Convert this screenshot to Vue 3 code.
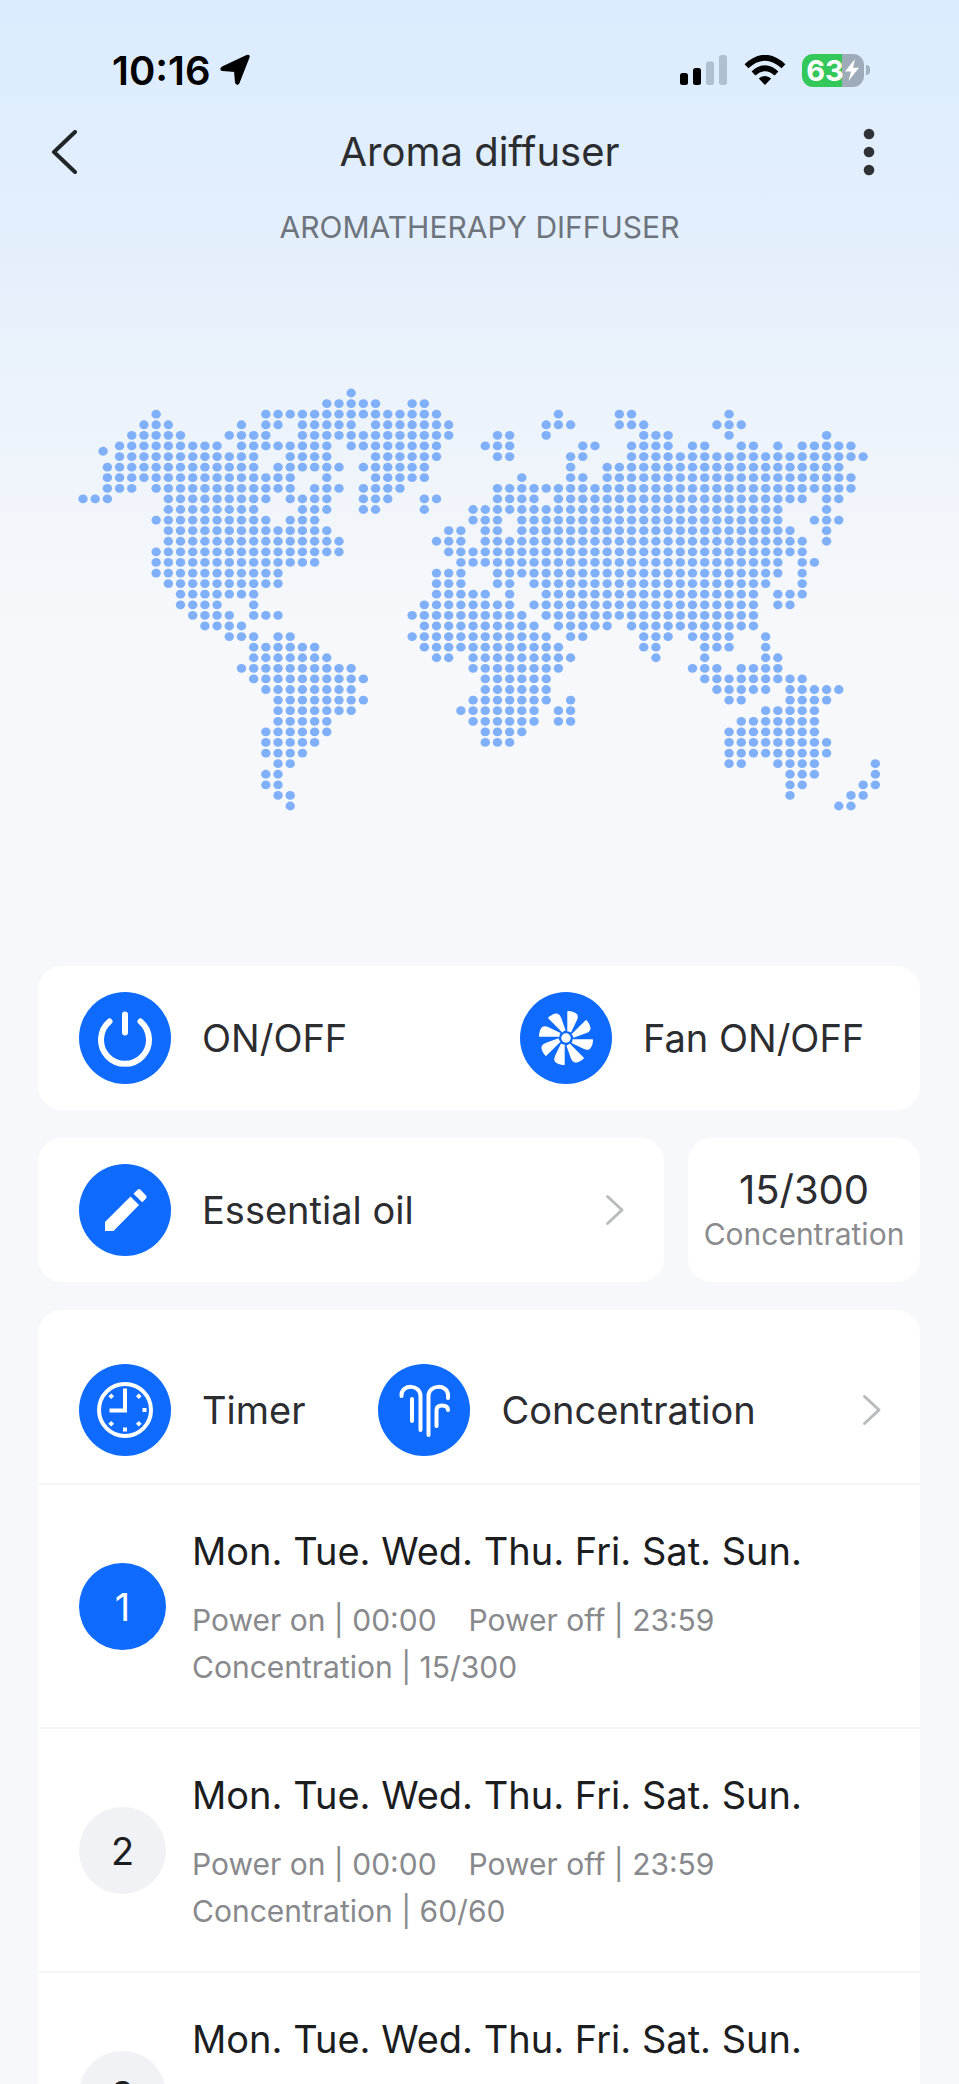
<script setup>
const land = [
  '22', '20-24 27-28', '6 15-29 39 44-45 53', '5-7 13 15-16 18-22 24-30 38-40 44-46 52-54',
  '4-8 12-15 18-30 34-35 38 46-48 53 61', '3-11 13-20 22-29 33-35 41-42 45-48 50-51 54-55 57 59-63',
  '3-14 17-20 24-29 34-35 40-41 45-64', '2-14 16-21 23-28 40 43-62',
  '2-17 20 24-28 36 40-41 43-63', '2-4 6-17 19-21 23-26 34-63',
  '0-2 7-15 17-20 23-25 28-29 34-37 39-59 61-62', '7-14 18-20 23-24 28 32-57 61',
  '6-15 17-19 32-34 36-57 60-62', '7-20 30-31 33-34 36-58 61', '7-21 29-31 33-59 61',
  '6-21 30-59', '6-19 31-57 59-60', '6-16 29-31 34-57 59', '7-16 29-31 34-35 37-56 59',
  '8-14 29-33 35 38-55 57-59', '8-11 14 28-35 37-55 57-58', '9-12 14-16 27-36 38-55',
  '10-13 28-37 39-43 45-55', '12-14 16-17 27-38 40-41 46-48 50-53 56',
  '14-19 28-39 46-47 51-53 56', '14-20 29-30 32-40 47 51 56-57', '13-22 32-39 50-52 54-57',
  '14-23 33-38 51-59', '15-22 33-38 52-56 58-62', '16-23 32-38 40 53-54 58-61',
  '16-22 31-37 39-40 56-60', '16-20 32-37 39-40 54-60', '15-20 33-36 53-60',
  '15-19 33-35 53-61', '15-18 53-61', '16-17 53-54 57-60 65', '15-16 58-60 65',
  '15-16 58-59 64-65', '16-17 58 63-64', '17 62-63'
]

const dots = land.flatMap((row, r) =>
  row.split(' ').flatMap((span) => {
    const [from, to = from] = span.split('-').map(Number)
    return Array.from({ length: to - from + 1 }, (_, i) => ({ c: from + i, r }))
  })
)
dots.push({ c: 1.65, r: 5.5 })

const schedules = [
  { id: 1, on: '00:00', off: '23:59', level: '15/300', active: true },
  { id: 2, on: '00:00', off: '23:59', level: '60/60', active: false },
  { id: 3, active: false }
]
const blades = [0, 45, 90, 135, 180, 225, 270, 315]
const ticks = [45, 90, 135, 180, 225, 315]
</script>

<template>
  <div class="screen">
    <div class="status">
      <div class="clock">
        <span>10:16</span>
        <svg class="arrow" viewBox="0 0 32 32" aria-hidden="true"><path d="M28 2Q30.500 1 29.500 3.500L19.500 29Q18 31 17 28.500L16 17L3.500 16Q1 15 3.500 13.500Z" /></svg>
      </div>
      <div class="signals">
        <svg class="bars" viewBox="0 0 48 30" aria-hidden="true">
          <rect x="0" y="18" width="8" height="12" rx="2.500" /><rect x="13" y="13" width="8" height="17" rx="2.500" />
          <g fill="#b1c0d0"><rect x="26" y="6.500" width="8" height="23.500" rx="2.500" /><rect x="39" y="0" width="8" height="30" rx="2.500" /></g>
        </svg>
        <svg class="wifi" viewBox="0 0 42 30" aria-hidden="true">
          <g fill="none" stroke="#000" stroke-width="5.600"><path d="M2.500 11.200Q21-5.800 39.500 11.200" /><path d="M9.500 18.500Q21 8 32.500 18.500" /></g>
          <path d="M14.800 23.600Q21 18.200 27.200 23.600L21 30Z" />
        </svg>
        <div class="battery"><span>63</span><svg viewBox="0 0 16 22" aria-hidden="true"><path d="M11 0L1 12.500H7L4.500 22L15 8.800H9Z" /></svg></div>
      </div>
    </div>

    <header class="bar">
      <button class="plain" aria-label="Back"><svg class="back" viewBox="0 0 28 44" aria-hidden="true"><path d="M25 2L4 22L25 42" /></svg></button>
      <h1>Aroma diffuser</h1>
      <button class="plain more" aria-label="More"><svg class="kebab" viewBox="0 0 12 48" aria-hidden="true"><circle cx="6" cy="6" r="5.300" /><circle cx="6" cy="24" r="5.300" /><circle cx="6" cy="42" r="5.300" /></svg></button>
    </header>
    <p class="model">AROMATHERAPY DIFFUSER</p>

    <svg class="map" viewBox="0 0 802 423" role="img" aria-label="World map">
      <ellipse v-for="(d, i) in dots" :key="i" :cx="5 + d.c * 12.19" :cy="5 + d.r * 10.59" rx="4.700" ry="4.400" />
    </svg>

    <main class="panels">
      <section class="card pair">
        <button class="action">
          <svg class="disc" viewBox="0 0 92 92" aria-hidden="true"><circle cx="46" cy="46" r="46" /><path class="line thick" d="M46 22.500V40.500M30.500 29.500A24 24 0 1 0 61.500 29.500" /></svg>
          <span>ON/OFF</span>
        </button>
        <button class="action">
          <svg class="disc" viewBox="0 0 92 92" aria-hidden="true">
            <circle cx="46" cy="46" r="46" />
            <g class="solid"><circle cx="46" cy="46" r="4.700" /><path v-for="a in blades" :key="a" :transform="`rotate(${a} 46 46)`" d="M47.300 39.500V19.500Q47.300 18.800 49 19Q55 19.700 57.200 22.500Q58.500 25 57 28L51 40.500Q49.500 39.300 47.300 39.500Z" /></g>
          </svg>
          <span>Fan ON/OFF</span>
        </button>
      </section>

      <div class="split">
        <button class="card action oil">
          <svg class="disc" viewBox="0 0 92 92" aria-hidden="true"><circle cx="46" cy="46" r="46" /><path class="solid" d="M26 58L51.500 32.500L60 41L34.500 67H26ZM54.500 29.700L58.500 25.700Q60 24.500 61.500 25.700L67 31.500Q68.200 33 67 34.500L63.200 38.300Z" /></svg>
          <span class="grow">Essential oil</span>
          <svg class="chevron" viewBox="0 0 20 32" aria-hidden="true"><path d="M2.500 2.500L17 16L2.500 29.500" /></svg>
        </button>
        <div class="card level"><strong>15/300</strong><span>Concentration</span></div>
      </div>

      <section class="card plan">
        <button class="action head">
          <svg class="disc" viewBox="0 0 92 92" aria-hidden="true">
            <circle cx="46" cy="46" r="46" />
            <circle class="line" cx="46" cy="46" r="26" /><path class="line square" d="M46 24.500V46.500H30.500" />
            <path v-for="a in ticks" :key="a" class="line tick" :transform="`rotate(${a} 46 46)`" d="M46 24.500V28.500" />
          </svg>
          <span>Timer</span>
          <svg class="disc second" viewBox="0 0 92 92" aria-hidden="true"><circle cx="46" cy="46" r="46" /><path class="line" d="M23.500 32V31C23.500 20 42.500 20 42.500 32V66M50.500 71V32C50.500 20 70 20 70 31V34M34 35V57M58.500 62V46Q58.500 41.500 64 41.500Q70 41.500 70 46" /></svg>
          <span class="grow">Concentration</span>
          <svg class="chevron" viewBox="0 0 20 32" aria-hidden="true"><path d="M2.500 2.500L17 16L2.500 29.500" /></svg>
        </button>
        <ul>
          <li v-for="s in schedules" :key="s.id">
            <span class="badge" :class="{ on: s.active }">{{ s.id }}</span>
            <div class="info">
              <h2>Mon. Tue. Wed. Thu. Fri. Sat. Sun.</h2>
              <template v-if="s.level">
                <p><span>Power on | {{ s.on }}</span><span>Power off | {{ s.off }}</span></p>
                <p>Concentration | {{ s.level }}</p>
              </template>
            </div>
          </li>
        </ul>
      </section>
    </main>
  </div>
</template>

<style>
body { background: #f6f8fb; }
</style>

<style scoped>
.screen {
  box-sizing: border-box;
  height: 100vh;
  overflow: hidden;
  background: linear-gradient(#dbecfe 0, #e4effc 240px, #ecf3fb 400px, #f6f8fb 620px, #f6f8fb 100%);
  color: #2c2d30;
  font-family: Inter, "Liberation Sans", sans-serif;
}
button { border: 0; background: none; padding: 0; color: inherit; font: inherit; text-align: left; cursor: pointer; }
h1, h2, p, ul { margin: 0; padding: 0; }
svg { flex: none; }
.status { display: flex; justify-content: space-between; padding: 48px 95px 0 112px; height: 44px; }
.clock, .signals { display: flex; align-items: center; color: #000; }
.clock { gap: 8px; font-size: 40px; font-weight: 600; }
.arrow { width: 32px; height: 32px; stroke: #000; stroke-width: 2; stroke-linejoin: round; }
.bars { width: 48px; height: 30px; }
.wifi { width: 42px; height: 30px; margin: 0 16px; }
.battery {
  position: relative; display: flex; align-items: center; justify-content: center;
  width: 62px; height: 33px; border-radius: 11px;
  background: linear-gradient(90deg, #34c759 65%, #9eabb9 65%);
  color: #fff; font-size: 29px; font-weight: 700;
}
.battery svg { width: 16px; height: 22px; fill: #fff; }
.battery::after { content: ""; position: absolute; right: -6px; top: 11px; width: 4px; height: 10px; border-radius: 0 4px 4px 0; background: #a3b0be; }
.bar { display: grid; grid-template-columns: 84px 1fr 84px; align-items: center; height: 60px; margin-top: 30px; padding: 0 50px; }
.plain { display: flex; }
.more { justify-content: flex-end; padding-right: 34px; }
.back { width: 28px; height: 44px; fill: none; stroke: #222629; stroke-width: 4; stroke-linecap: round; stroke-linejoin: round; }
.kebab { width: 12px; height: 48px; fill: #303236; }
h1 { text-align: center; font-size: 40px; font-weight: 400; line-height: 60px; }
.model { margin-top: 25px; text-align: center; font-size: 30px; line-height: 40px; color: #6d747d; }
.map { display: block; width: calc(100% - 157px); margin: 141px 79px 0 78px; fill: #80b0f9; }
.panels { display: flex; flex-direction: column; gap: 28px; margin: 155px 39px 0 38px; font-size: 38px; }
.card { border-radius: 24px; background: #fff; }
.pair { display: grid; grid-template-columns: 1fr 1fr; height: 144px; }
.action { display: flex; align-items: center; padding-left: 41px; }
.disc { width: 92px; height: 92px; margin-right: 31px; fill: #0f6bff; }
.line { fill: none; stroke: #fff; stroke-width: 4; stroke-linecap: round; }
.thick { stroke-width: 6; }
.square { stroke-linecap: butt; }
.tick { stroke-linecap: butt; }
.solid { fill: #fff; }
.grow { flex: 1; }
.chevron { width: 20px; height: 32px; fill: none; stroke: #b9bbbe; stroke-width: 3; stroke-linecap: round; stroke-linejoin: round; }
.split { display: grid; grid-template-columns: 1fr 232px; gap: 24px; height: 144px; }
.oil { padding-right: 39px; }
.level { display: flex; flex-direction: column; align-items: center; justify-content: center; padding-top: 4px; }
.level strong { font-size: 40px; font-weight: 400; line-height: 44px; }
.level span { font-size: 30px; line-height: 44px; color: #8a8b8e; }
.plan { border-radius: 24px 24px 0 0; }
.head { width: 100%; height: 173px; padding-top: 26px; padding-right: 38px; box-sizing: border-box; }
.second { margin-left: 73px; }
ul { list-style: none; }
li { display: flex; height: 242px; border-top: 2px solid #f5f6f8; padding-left: 41px; }
.badge { display: flex; align-items: center; justify-content: center; flex: none; width: 87px; height: 87px; margin-top: 78px; border-radius: 50%; background: #f1f2f6; color: #1c1d1f; }
.badge.on { background: #0f6bff; color: #fff; }
.info { margin: 40px 0 0 26px; }
h2 { margin-bottom: 20px; font-size: 38px; font-weight: 400; line-height: 52px; color: #1c1d1f; }
.info p { display: flex; gap: 32px; font-size: 30px; line-height: 47px; color: #88898c; }
</style>
